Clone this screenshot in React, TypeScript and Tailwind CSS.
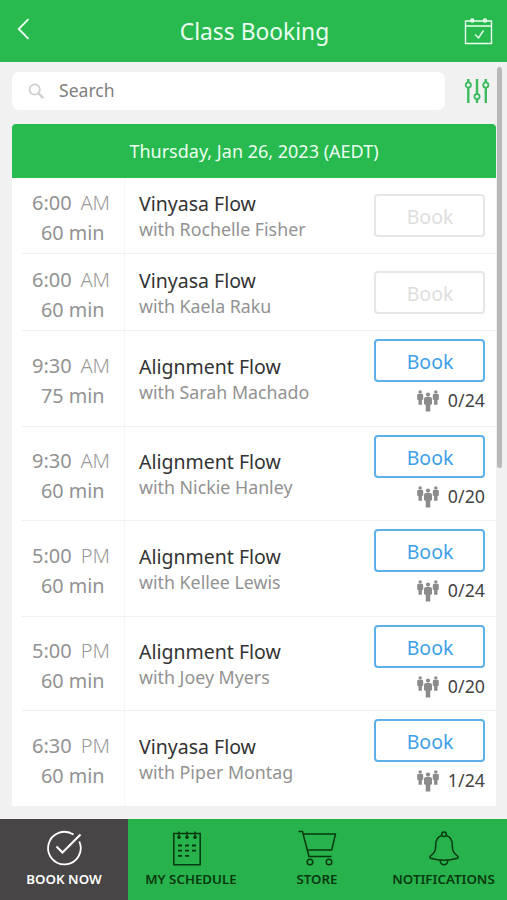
import React from "react";

type ClassRow = {
  time: string;
  period: string;
  length: string;
  title: string;
  teacher: string;
  spots?: string;
  size: string;
  action: string;
};

const classes: ClassRow[] = [
  { time: "6:00", period: "AM", length: "60 min", title: "Vinyasa Flow", teacher: "Rochelle Fisher", size: "h-[76px]", action: "pt-4" },
  { time: "6:00", period: "AM", length: "60 min", title: "Vinyasa Flow", teacher: "Kaela Raku", size: "h-[77px]", action: "pt-[17px]" },
  { time: "9:30", period: "AM", length: "75 min", title: "Alignment Flow", teacher: "Sarah Machado", spots: "0/24", size: "h-24", action: "pt-2" },
  { time: "9:30", period: "AM", length: "60 min", title: "Alignment Flow", teacher: "Nickie Hanley", spots: "0/20", size: "h-[94px]", action: "pt-2" },
  { time: "5:00", period: "PM", length: "60 min", title: "Alignment Flow", teacher: "Kellee Lewis", spots: "0/24", size: "h-24", action: "pt-2" },
  { time: "5:00", period: "PM", length: "60 min", title: "Alignment Flow", teacher: "Joey Myers", spots: "0/20", size: "h-[94px]", action: "pt-2" },
  { time: "6:30", period: "PM", length: "60 min", title: "Vinyasa Flow", teacher: "Piper Montag", spots: "1/24", size: "h-[95px]", action: "pt-2" },
];

function PeopleIcon() {
  return (
    <svg width="22" height="22" viewBox="0 0 22 22" fill="#8b8b8b">
      <circle cx="3.200" cy="1.900" r="1.700" />
      <path d="M1.700 3.800h3q1.500 0 1.500 1.400v4.300l-1.300.8v4.500H1.500v-4.500L.2 9.500V5.200q0-1.400 1.500-1.400z" />
      <circle cx="18.800" cy="1.900" r="1.700" />
      <path d="M17.300 3.800h3q1.500 0 1.500 1.400v4.300l-1.300.8v4.500h-3.400v-4.500l-1.300-.8V5.200q0-1.400 1.500-1.400z" />
      <circle cx="11" cy="4.600" r="2.100" />
      <path d="M9 7h4q2 0 2 1.900v5l-1.700 1v6.600H8.700v-6.600l-1.700-1v-5Q7 7 9 7z" />
    </svg>
  );
}

function Row({ item, last }: { item: ClassRow; last: boolean }) {
  return (
    <div className={`flex pl-[10px] ${item.size}`}>
      <div className={`flex flex-1 ${last ? "" : "border-b border-[#edf1f1]"}`}>
        <div className="flex w-[103px] shrink-0 flex-col justify-center border-r border-[#f4f7f7] pt-[5px] text-[20px] leading-[30px] whitespace-nowrap text-[#929292]">
          <div className="ml-[10px] flex w-[78px] justify-between">
            <span>{item.time}</span>
            <span className="font-light text-[#999]">{item.period}</span>
          </div>
          <div className="pl-[19px] text-[19.800px]">{item.length}</div>
        </div>
        <div className="flex flex-1 flex-col justify-center pt-[2px] pl-[14px] whitespace-nowrap">
          <div className="text-[19.500px] leading-[26px] text-[#333]">{item.title}</div>
          <div className="text-[17.800px] leading-[25px] text-[#929292]">with {item.teacher}</div>
        </div>
        <div className={`flex w-[122px] shrink-0 flex-col pr-[11px] ${item.action}`}>
          <button
            className={`h-[43px] w-full shrink-0 rounded-[4px] border-2 pt-[2px] pl-px text-[19.500px] leading-[38px] ${
              item.spots ? "border-[#5db1e8] text-[#3c9fe8]" : "border-[#e6e6e6] text-[#dedede]"
            }`}
          >
            Book
          </button>
          {item.spots && (
            <div className="flex items-center justify-end gap-[9px] pt-[6px] text-[17.800px] leading-[24px] text-[#444]">
              <div className="pt-[2px]">
                <PeopleIcon />
              </div>
              <span>{item.spots}</span>
            </div>
          )}
        </div>
      </div>
    </div>
  );
}

function BookIcon() {
  return (
    <svg width="36" height="36" viewBox="0 0 36 36" fill="none" stroke="#fff" strokeWidth="1.800">
      <path d="M27.500 4.600A16.300 16.300 0 1 0 33.300 11.500" />
      <path d="M10.500 16.500l6 6L34.500 4.500" strokeWidth="2.100" />
    </svg>
  );
}

function ScheduleIcon() {
  return (
    <svg className="mr-[8px]" width="28" height="35" viewBox="0 0 28 35" fill="none" stroke="#07390f" strokeWidth="1.500">
      <path d="M.8 2.500h26.400v31.300H.8z" />
      <path d="M6 .5v6M14 .5v6M22 .5v6" />
      <g fill="#07390f" stroke="none">
        <circle cx="6" cy="6.200" r="1.800" />
        <circle cx="14" cy="6.200" r="1.800" />
        <circle cx="22" cy="6.200" r="1.800" />
      </g>
      <path d="M5 14.500h4M12 14.500h4M19 14.500h4M5 19.700h4M12 19.700h4M19 19.700h4M5 24.900h4M12 24.900h4" strokeWidth="1.800" />
    </svg>
  );
}

function CartIcon() {
  return (
    <svg width="39" height="36" viewBox="0 0 39 36" fill="none" stroke="#07390f" strokeWidth="1.500">
      <path d="M.5 1.500h4L11 26.400h22.500" />
      <path d="M5.200 4h32.300L33.700 20H9.400" strokeLinejoin="round" />
      <circle cx="12" cy="32" r="2.800" />
      <circle cx="31" cy="32" r="2.800" />
    </svg>
  );
}

function BellIcon() {
  return (
    <svg width="30" height="35" viewBox="0 0 30 35" fill="none" stroke="#07390f" strokeWidth="1.500" strokeLinejoin="round">
      <circle cx="15" cy="3.200" r="2.300" />
      <path d="M12.500 4.800C8.500 6 6.700 9.500 6.700 14c0 6-1.200 8-5.200 11-.9 1-.9 2 .2 2.300 8 2.400 18.600 2.400 26.600 0 1.100-.3 1.100-1.300.2-2.300-4-3-5.200-5-5.200-11 0-4.500-1.800-8-5.800-9.200" />
      <path d="M11.300 29.200a3.750 4 0 1 0 7.400 0" />
    </svg>
  );
}

const tabs = [
  { label: "BOOK NOW", icon: <BookIcon />, style: "w-[128px] bg-[#474545] text-white" },
  { label: "MY SCHEDULE", icon: <ScheduleIcon />, style: "w-[126px] text-[#07390f]" },
  { label: "STORE", icon: <CartIcon />, style: "w-[126px] text-[#07390f]" },
  { label: "NOTIFICATIONS", icon: <BellIcon />, style: "w-[127px] text-[#07390f]" },
];

export default function App() {
  return (
    <div className="relative flex h-[900px] w-[507px] flex-col overflow-hidden bg-[#f1f1f1] font-['Noto_Sans',sans-serif]">
      <header className="flex h-[62px] shrink-0 items-center justify-between bg-[#28b94f] pr-[14px] pl-[17px] text-[#eafff0]">
        <svg className="mb-[5px]" width="28" height="22" viewBox="0 0 28 22" fill="none" stroke="currentColor" strokeWidth="1.900">
          <path d="M11.500 1.200L1.700 11l9.800 9.800" />
        </svg>
        <h1 className="pt-[2px] text-[22.800px] leading-[30px]">Class Booking</h1>
        <svg width="29" height="28" viewBox="0 0 29 28" fill="none" stroke="currentColor" strokeWidth="1.400">
          <path d="M1.500 4h26v22.500h-26zM1.500 9h26M11 17.500l3.500 3.500 5-7.500" />
          <circle cx="8.300" cy="3.500" r="1.500" fill="#bdf0c9" />
          <circle cx="21" cy="3.500" r="1.500" fill="#bdf0c9" />
        </svg>
      </header>

      <div className="flex h-[62px] shrink-0 items-start pt-[10px] pl-3">
        <div className="flex h-[38px] w-[433px] items-center rounded-[7px] bg-white pl-4">
          <svg width="17" height="17" viewBox="0 0 17 17" fill="none" stroke="#cfcfcf">
            <circle cx="6.700" cy="6.500" r="5.100" strokeWidth="1.800" />
            <path d="M10.500 10.300l4.800 4.800" strokeWidth="2.600" />
          </svg>
          <span className="pb-[2px] pl-[14px] text-[17.600px] leading-6 text-[#808080]">Search</span>
        </div>
        <svg className="mt-[6px] ml-[19px]" width="26" height="26" viewBox="0 0 26 26" fill="none" stroke="#3dbb60" strokeWidth="2.400">
          <path d="M4.300 1v3.500M4.300 9.500V25M13 1v15M13 21v4M21.800 1v3.500M21.800 9.500V25" />
          <g strokeWidth="1.800">
            <circle cx="4.300" cy="7" r="2.600" />
            <circle cx="13" cy="18.600" r="2.600" />
            <circle cx="21.800" cy="7" r="2.600" />
          </g>
        </svg>
      </div>

      <main className="ml-3 flex w-[484px] flex-col overflow-hidden rounded-t-[4px] bg-white">
        <div className="flex h-[54px] items-center justify-center bg-[#28b94f] text-[18px] text-[#eafff0]">
          Thursday, Jan 26, 2023 (AEDT)
        </div>
        {classes.map((item, i) => (
          <Row key={i} item={item} last={i === classes.length - 1} />
        ))}
      </main>

      <nav className="mt-auto flex h-[81px] shrink-0 bg-[#28b24c]">
        {tabs.map((tab) => (
          <div key={tab.label} className={`flex shrink-0 flex-col items-center pt-[11px] ${tab.style}`}>
            <div className="flex h-9 items-center">{tab.icon}</div>
            <span className="mt-[4px] text-[13.300px] leading-[18px] font-semibold whitespace-nowrap">{tab.label}</span>
          </div>
        ))}
      </nav>

      <div className="absolute top-[67px] left-[497px] h-[401px] w-[5px] rounded-full bg-[#b9b9b9]" />
    </div>
  );
}
